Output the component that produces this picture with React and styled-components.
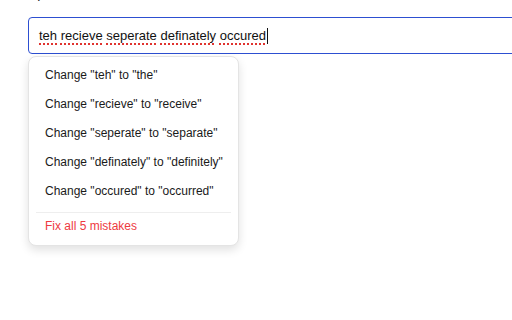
import styled, { createGlobalStyle } from 'styled-components'

const GlobalStyle = createGlobalStyle`
  html, body {
    margin: 0;
    padding: 0;
    background: #fff;
    font-family: "Liberation Sans", Arial, Helvetica, sans-serif;
    overflow: hidden;
  }
`

const Page = styled.div`
  width: 512px;
  height: 320px;
  padding-left: 28px;
  box-sizing: border-box;
  overflow: hidden;
`

const Label = styled.div`
  font-size: 14px;
  line-height: 16px;
  color: #222;
  margin-top: -15px;
  margin-bottom: 16px;
`

const Field = styled.div`
  position: relative;
  width: 520px;
`

const InputBox = styled.div`
  height: 37px;
  box-sizing: border-box;
  border: 1.5px solid #2d4fd1;
  border-radius: 4px;
  padding: 0 10px;
  display: flex;
  align-items: center;
  font-size: 13px;
  color: #111;
  white-space: pre;
`

const Misspelled = styled.span`
  text-decoration: underline dotted #e0332f;
  text-decoration-thickness: 1.5px;
  text-underline-offset: 3px;
`

const Caret = styled.span`
  display: inline-block;
  width: 1px;
  height: 16px;
  background: #111;
  margin-left: 1px;
`

const Menu = styled.div`
  position: absolute;
  top: 39px;
  left: 0;
  width: 211px;
  box-sizing: border-box;
  background: #fff;
  border: 1px solid #e4e4e4;
  border-radius: 8px;
  box-shadow: 0 4px 10px rgba(0, 0, 0, 0.12);
  padding: 4px 0 6px;
`

const Item = styled.div`
  font-size: 12px;
  line-height: ${(p) => (p.$danger ? '26px' : '29px')};
  padding: 0 16px;
  white-space: nowrap;
  color: ${(p) => (p.$danger ? '#ee3a3f' : '#1a1a1a')};
`

const Divider = styled.div`
  height: 1px;
  background: #eeeeee;
  margin: 6px 7px 0;
`

const words = ['teh', 'recieve', 'seperate', 'definately', 'occured']
const fixes = [
  ['teh', 'the'],
  ['recieve', 'receive'],
  ['seperate', 'separate'],
  ['definately', 'definitely'],
  ['occured', 'occurred'],
]

export default function App() {
  return (
    <>
      <GlobalStyle />
      <Page>
        <Label>Spell check</Label>
        <Field>
          <InputBox>
            {words.map((w, i) => (
              <span key={w}>
                <Misspelled>{w}</Misspelled>
                {i < words.length - 1 ? ' ' : ''}
              </span>
            ))}
            <Caret />
          </InputBox>
          <Menu>
            {fixes.map(([from, to]) => (
              <Item key={from}>
                Change "{from}" to "{to}"
              </Item>
            ))}
            <Divider />
            <Item $danger>Fix all 5 mistakes</Item>
          </Menu>
        </Field>
      </Page>
    </>
  )
}
